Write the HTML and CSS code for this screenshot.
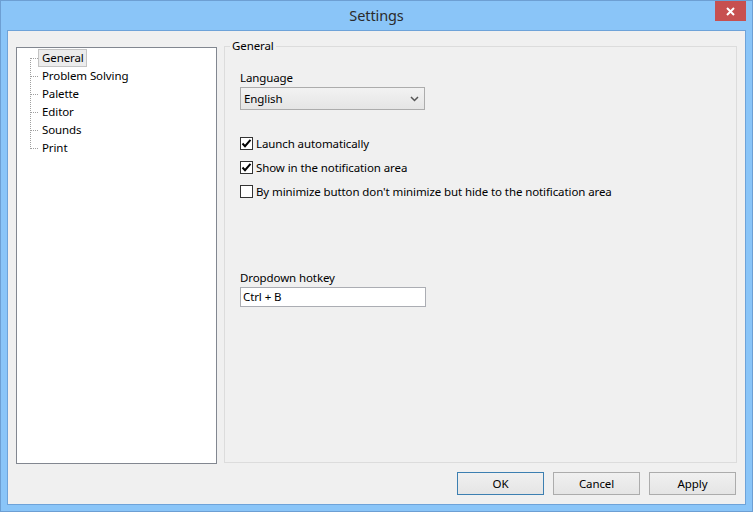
FILE: index.html
```html
<!DOCTYPE html>
<html>
<head>
<meta charset="utf-8">
<link rel="stylesheet" href="styles.css">
</head>
<body>
<div class="window">
  <div class="titlebar">
    <div class="title">Settings</div>
    <div class="close"><svg width="9" height="9" viewBox="0 0 9 9"><path d="M1 1 L8 8 M8 1 L1 8" stroke="#fff" stroke-width="2"/></svg></div>
  </div>
  <div class="client">
    <div class="main">
      <div class="tree">
        <ul class="nodes">
          <li class="node selected"><span class="label">General</span></li>
          <li class="node"><span class="label">Problem Solving</span></li>
          <li class="node"><span class="label">Palette</span></li>
          <li class="node"><span class="label">Editor</span></li>
          <li class="node"><span class="label">Sounds</span></li>
          <li class="node"><span class="label">Print</span></li>
        </ul>
      </div>
      <fieldset class="group">
        <legend class="legend">General</legend>
        <div class="field-label lang-label">Language</div>
        <div class="select">
          <span>English</span>
          <svg class="chev" width="9" height="6" viewBox="0 0 9 6"><path d="M1 1 L4.5 4.5 L8 1" fill="none" stroke="#555" stroke-width="1.5"/></svg>
        </div>
        <div class="checks">
          <div class="check-row"><span class="box"><svg width="11" height="11" viewBox="0 0 11 11"><path d="M1.5 5.5 L4 8.2 L9.5 1.8" fill="none" stroke="#000" stroke-width="2"/></svg></span><span>Launch automatically</span></div>
          <div class="check-row"><span class="box"><svg width="11" height="11" viewBox="0 0 11 11"><path d="M1.5 5.5 L4 8.2 L9.5 1.8" fill="none" stroke="#000" stroke-width="2"/></svg></span><span>Show in the notification area</span></div>
          <div class="check-row"><span class="box"></span><span>By minimize button don't minimize but hide to the notification area</span></div>
        </div>
        <div class="field-label hotkey-label">Dropdown hotkey</div>
        <div class="textbox">Ctrl + B</div>
      </fieldset>
    </div>
    <div class="buttons">
      <div class="btn default">OK</div>
      <div class="btn">Cancel</div>
      <div class="btn">Apply</div>
    </div>
  </div>
</div>
</body>
</html>
```

FILE: styles.css
```css
* { box-sizing: border-box; }
html, body { margin: 0; padding: 0; }
body {
  font-family: "Noto Sans", "Open Sans", sans-serif;
  font-size: 11.5px;
  letter-spacing: -0.1px;
  color: #000;
  background: #8ac5f8;
}
.window {
  width: 753px;
  height: 512px;
  border: 1px solid #6d9fd3;
  background: #8ac5f8;
  padding: 0 6px 6px 6px;
  display: flex;
  flex-direction: column;
}
.titlebar {
  height: 29px;
  display: grid;
  grid-template-columns: 1fr auto 1fr;
  align-items: start;
}
.title {
  grid-column: 2;
  font-size: 14.5px;
  line-height: 28px;
  color: #2b2b2b;
}
.close {
  grid-column: 3;
  justify-self: end;
  width: 31px;
  height: 20px;
  background: #c75050;
  display: flex;
  align-items: center;
  justify-content: center;
}
.client {
  flex: 1;
  border: 1px solid #6ea3d9;
  background: #f0f0f0;
  display: flex;
  flex-direction: column;
}
.main {
  display: flex;
  align-items: flex-start;
  padding: 7px 8px 0 8px;
  gap: 7px;
}
.tree {
  width: 201px;
  height: 417px;
  margin-top: 9px;
  border: 1px solid #828790;
  background: #fff;
}
.nodes {
  list-style: none;
  margin: 0;
  padding: 1px 0 0 0;
  position: relative;
}
.nodes::before {
  content: "";
  position: absolute;
  left: 13px;
  top: 10px;
  height: 91px;
  border-left: 1px dotted #a0a0a0;
}
.node {
  height: 18px;
  position: relative;
  padding-left: 21px;
  line-height: 16px;
}
.node::before {
  content: "";
  position: absolute;
  left: 14px;
  top: 9px;
  width: 7px;
  border-top: 1px dotted #a0a0a0;
}
.label {
  display: inline-block;
  height: 18px;
  padding: 0 2px 0 3px;
  border: 1px solid transparent;
  line-height: 16px;
  white-space: nowrap;
}
.selected .label {
  border-color: #c4c4c4;
  background: #ececec;
}
.group {
  width: 513px;
  height: 425px;
  margin: 0;
  padding: 0 0 0 15px;
  border: 1px solid #dcdcdc;
  min-width: 0;
}
.legend {
  padding: 0 2px;
  margin-left: -10px;
  line-height: 16px;
}
.field-label {
  line-height: 16px;
  height: 16px;
}
.lang-label { margin-top: 16px; }
.select {
  margin-top: 1px;
  width: 185px;
  height: 23px;
  border: 1px solid #acacac;
  background: linear-gradient(#f2f2f2, #e5e5e5);
  display: flex;
  align-items: center;
  justify-content: space-between;
  padding: 0 5px 0 3px;
}
.checks {
  margin-top: 21px;
  display: flex;
  flex-direction: column;
}
.check-row {
  height: 24px;
  display: flex;
  align-items: center;
  gap: 3px;
  white-space: nowrap;
}
.box {
  width: 13px;
  height: 13px;
  border: 1px solid #333;
  background: #fff;
  display: flex;
  align-items: center;
  justify-content: center;
}
.hotkey-label { margin-top: 67px; }
.textbox {
  margin-top: 1px;
  width: 186px;
  height: 20px;
  border: 1px solid #abadb3;
  background: #fff;
  line-height: 18px;
  padding-left: 2px;
}
.buttons {
  display: flex;
  justify-content: flex-end;
  gap: 9px;
  padding: 0 9px 0 0;
  margin-top: 8px;
}
.btn {
  width: 87px;
  height: 23px;
  border: 1px solid #acacac;
  background: linear-gradient(#f0f0f0, #e5e5e5);
  display: flex;
  align-items: center;
  justify-content: center;
}
.btn.default {
  border-color: #3c7fb1;
}
```
